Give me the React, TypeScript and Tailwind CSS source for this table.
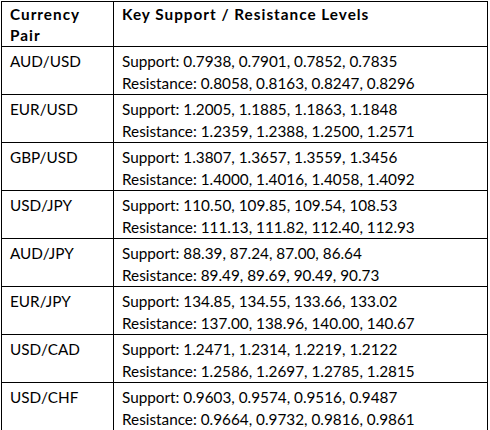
const rows = [
  { pair: "AUD/USD", support: "0.7938, 0.7901, 0.7852, 0.7835", resistance: "0.8058, 0.8163, 0.8247, 0.8296" },
  { pair: "EUR/USD", support: "1.2005, 1.1885, 1.1863, 1.1848", resistance: "1.2359, 1.2388, 1.2500, 1.2571" },
  { pair: "GBP/USD", support: "1.3807, 1.3657, 1.3559, 1.3456", resistance: "1.4000, 1.4016, 1.4058, 1.4092" },
  { pair: "USD/JPY", support: "110.50, 109.85, 109.54, 108.53", resistance: "111.13, 111.82, 112.40, 112.93" },
  { pair: "AUD/JPY", support: "88.39, 87.24, 87.00, 86.64", resistance: "89.49, 89.69, 90.49, 90.73" },
  { pair: "EUR/JPY", support: "134.85, 134.55, 133.66, 133.02", resistance: "137.00, 138.96, 140.00, 140.67" },
  { pair: "USD/CAD", support: "1.2471, 1.2314, 1.2219, 1.2122", resistance: "1.2586, 1.2697, 1.2785, 1.2815" },
  { pair: "USD/CHF", support: "0.9603, 0.9574, 0.9516, 0.9487", resistance: "0.9664, 0.9732, 0.9816, 0.9861" },
];

export default function App() {
  return (
    <div className="w-[490px] h-[430px] bg-white pt-px pl-px">
      <table
        className="border-collapse text-black text-[15.3px] leading-[22px] w-[487px]"
        style={{ fontFamily: "Lato, 'Liberation Sans', sans-serif" }}
      >
        <thead>
          <tr>
            <th className="border border-black w-[112px] text-left align-top font-bold tracking-[1px] leading-[21px] px-2 pt-[2px] pb-0">
              Currency
              <br />
              Pair
            </th>
            <th className="border border-black text-left align-top font-bold tracking-[1px] leading-[21px] px-2 pt-[2px] pb-0">
              Key Support / Resistance Levels
            </th>
          </tr>
        </thead>
        <tbody>
          {rows.map((r) => (
            <tr key={r.pair}>
              <td className="border border-black align-top px-2 pt-[3px] pb-0">{r.pair}</td>
              <td className="border border-black align-top px-2 pt-[3px] pb-0">
                <div>Support: {r.support}</div>
                <div>Resistance: {r.resistance}</div>
              </td>
            </tr>
          ))}
        </tbody>
      </table>
    </div>
  );
}
